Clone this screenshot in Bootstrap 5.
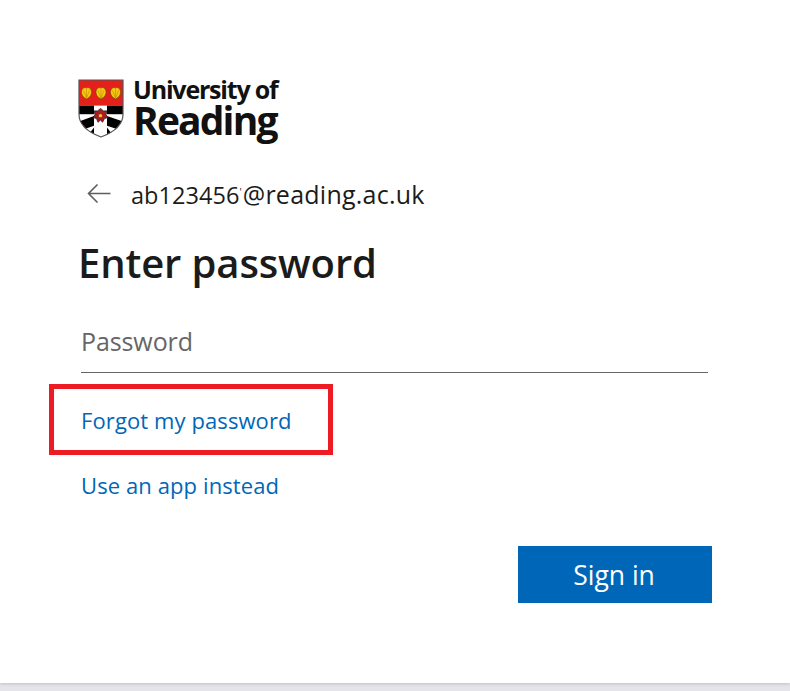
<!doctype html>
<html lang="en"><head><meta charset="utf-8"><title>Sign in</title>
<link href="https://cdn.jsdelivr.net/npm/bootstrap@5.3.0/dist/css/bootstrap.min.css" rel="stylesheet">
<style>
html,body{height:100%;overflow:hidden}
html{background:#e5e4ea}
body{font-family:"Open Sans","Noto Sans",sans-serif;color:#1b1b1b;background:#e5e4ea}
.signin-panel{height:683px;padding:78px 78px 0 78px;background:#fff;box-shadow:0 1px 3px rgba(70,65,100,.22)}
.crest{width:46px;height:59px;flex:none;align-self:flex-start;margin-top:1px}
.brand-text{margin-left:9px;color:#111;font-weight:700;line-height:1}
.brand-top{font-size:25px;letter-spacing:-1.2px;height:24px;line-height:22px}
.brand-main{font-size:39px;letter-spacing:-1.85px;height:38px;line-height:35px}
.ident{margin-top:36px;height:34px;padding-left:9px}
.ident svg{width:25px;height:25px;flex:none;margin-top:1px}
.ident-name{margin-left:19px;font-size:23.5px;letter-spacing:.05px;line-height:34px;color:#1b1b1b;white-space:nowrap}
.ident-name span{font-size:25px;letter-spacing:.25px;margin-left:1px}
.ident-name i{font-style:normal;font-size:10px;vertical-align:8px}
.page-title{margin:23px 0 0;font-size:40px;line-height:60px;font-weight:600;letter-spacing:-.12px;color:#1b1b1b}
.pw-wrap{margin-top:20px;width:627px;margin-left:3px}
.pw-input{height:60px;padding:0 0 4px;border:0;border-bottom:1px solid #666;border-radius:0;font-size:25px;letter-spacing:-.1px;color:#1b1b1b;background:transparent}
.pw-input::placeholder{color:#666;opacity:1}
.pw-input:focus{box-shadow:none;border-color:#666}
.help-links{margin-left:3px}
.help-link{display:block;color:#0067b8;font-size:22px;letter-spacing:.1px;line-height:30px;text-decoration:none}
.forgot-row{position:relative;margin-top:32px}
.callout{position:absolute;left:-32px;top:-21px;width:284px;height:71px;border:5px solid #ed1c24;pointer-events:none}
.app-row{margin-top:35px}
.action-row{margin-top:46px;width:634px}
.signin-btn{width:194px;height:57px;border-radius:0;border:0;background:#0067b8;color:#fff;font-size:26.5px;padding:3px 2px 0 0}
.signin-btn:hover{background:#005da6;color:#fff}
</style></head>
<body>
<main class="signin-panel">
  <div class="d-flex align-items-center">
    <svg class="crest" viewBox="0 0 46 62" preserveAspectRatio="none" role="img" aria-label="University of Reading crest">
      <defs><clipPath id="sh"><path d="M1 1H45V37C45 50 33 57 23 61C13 57 1 50 1 37Z"/></clipPath></defs>
      <g clip-path="url(#sh)">
        <rect width="46" height="62" fill="#fff"/>
        <rect width="46" height="28" fill="#e3201b"/>
        <rect y="28" width="46" height="9" fill="#000"/>
        <path d="M0 45L16 39V49L0 55ZM46 45L29 39V49L46 55Z" fill="#000"/>
        <path d="M8 62L16 51V62ZM37 62L29 51V62Z" fill="#000"/>
        <rect x="16" y="28" width="13" height="34" fill="#fff"/>
      </g>
      <path d="M1 1H45V37C45 50 33 57 23 61C13 57 1 50 1 37Z" fill="none" stroke="#555" stroke-width="1.2"/>
      <g fill="#f6c811" stroke="#6d4c00" stroke-width=".7">
        <path d="M8.500 21C6 20 3 17 3.500 13C4 10 6.500 8 8.500 9.500C10.500 8 13 10 13.500 13C14 17 11 20 8.500 21Z"/>
        <path d="M23 21C20.500 20 17.500 17 18 13C18.500 10 21 8 23 9.500C25 8 27.500 10 28 13C28.500 17 25.500 20 23 21Z"/>
        <path d="M37.500 21C35 20 32 17 32.500 13C33 10 35.500 8 37.500 9.500C39.500 8 42 10 42.500 13C43 17 40 20 37.500 21Z"/>
      </g>
      <g fill="none" stroke="#b87a0a" stroke-width=".5">
        <path d="M8.500 20V10M8.500 20L5.500 12M8.500 20L11.500 12M23 20V10M23 20L20 12M23 20L26 12M37.500 20V10M37.500 20L34.500 12M37.500 20L40.500 12"/>
      </g>
      <path d="M22.500 31L25.500 33.500L29 33.500L28 37.500L30 40.500L26.500 41.500L24.500 45.500L22.500 43L20 45.500L18.500 41.500L15 40.500L17 37.500L16 33.500L19.500 33.500Z" fill="#a81c22" stroke="#222" stroke-width=".8"/>
      <circle cx="22.500" cy="38.500" r="1.800" fill="#f0c419"/>
    </svg>
    <div class="brand-text">
      <div class="brand-top">University of</div>
      <div class="brand-main">Reading</div>
    </div>
  </div>
  <div class="ident d-flex align-items-center">
    <svg viewBox="0 0 25 25" aria-hidden="true"><path d="M1.500 12.500H23.500M10.500 3.500L1.500 12.500L10.500 21.500" fill="none" stroke="#5e5e5e" stroke-width="1.600"/></svg>
    <div class="ident-name">ab123456<i>'</i><span>@reading.ac.uk</span></div>
  </div>
  <h1 class="page-title">Enter password</h1>
  <div class="pw-wrap"><input class="form-control pw-input" type="password" placeholder="Password" aria-label="Password"></div>
  <div class="help-links">
    <div class="forgot-row"><a class="help-link" href="#">Forgot my password</a><div class="callout"></div></div>
    <div class="app-row"><a class="help-link" href="#">Use an app instead</a></div>
  </div>
  <div class="action-row d-flex justify-content-end"><button class="btn signin-btn" type="button">Sign in</button></div>
</main>
<script src="https://cdn.jsdelivr.net/npm/bootstrap@5.3.0/dist/js/bootstrap.bundle.min.js"></script>
</body></html>
